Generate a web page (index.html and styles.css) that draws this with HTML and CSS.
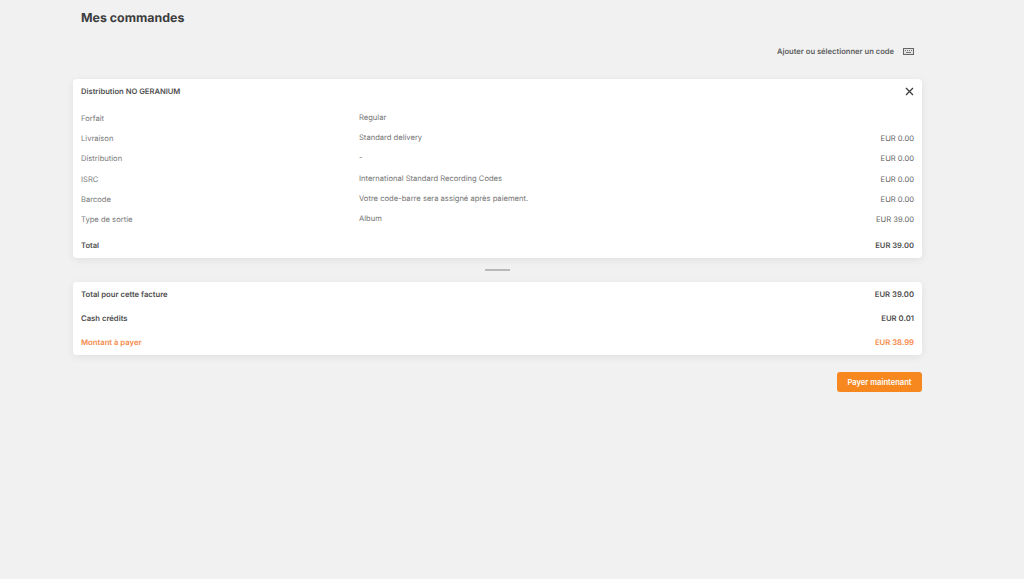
FILE: index.html
```html
<!DOCTYPE html>
<html lang="fr">
<head>
<meta charset="utf-8">
<title>Mes commandes</title>
<link rel="stylesheet" href="styles.css">
</head>
<body>
<main class="page">
  <h1 class="title">Mes commandes</h1>
  <div class="code-line">
    <span>Ajouter ou sélectionner un code</span>
    <svg class="code-icon" width="11" height="7" viewBox="0 0 11 7"><rect x="0.5" y="0.5" width="10" height="6" fill="#e4e4e4" stroke="#666"/><path d="M2 2h1v1H2zM4 2h1v1H4zM6 2h1v1H6zM8 2h1v1H8zM3 4h5v1H3z" fill="#777"/></svg>
  </div>
  <section class="card order">
    <header class="order-head">
      <span>Distribution NO GERANIUM</span>
      <svg class="close" width="9" height="9" viewBox="0 0 9 9"><path d="M1 1l7 7M8 1L1 8" stroke="#3c3c3c" stroke-width="1.3" fill="none"/></svg>
    </header>
    <div class="row"><span class="lbl">Forfait</span><span class="val">Regular</span><span class="price"></span></div>
    <div class="row"><span class="lbl">Livraison</span><span class="val">Standard delivery</span><span class="price">EUR 0.00</span></div>
    <div class="row"><span class="lbl">Distribution</span><span class="val">-</span><span class="price">EUR 0.00</span></div>
    <div class="row"><span class="lbl">ISRC</span><span class="val">International Standard Recording Codes</span><span class="price">EUR 0.00</span></div>
    <div class="row"><span class="lbl">Barcode</span><span class="val">Votre code-barre sera assigné après paiement.</span><span class="price">EUR 0.00</span></div>
    <div class="row"><span class="lbl">Type de sortie</span><span class="val">Album</span><span class="price">EUR 39.00</span></div>
    <div class="order-total"><span>Total</span><span>EUR 39.00</span></div>
  </section>
  <div class="divider"></div>
  <section class="card summary">
    <div class="sum-row"><span>Total pour cette facture</span><span>EUR 39.00</span></div>
    <div class="sum-row"><span>Cash crédits</span><span>EUR 0.01</span></div>
    <div class="sum-row due"><span>Montant à payer</span><span>EUR 38.99</span></div>
  </section>
  <div class="actions"><button class="pay">Payer maintenant</button></div>
</main>
</body>
</html>
```
FILE: styles.css
```css
* { box-sizing: border-box; }
html, body { margin: 0; height: 100%; }
body {
  background: #f1f1f2;
  font-family: Inter, Roboto, "Liberation Sans", sans-serif;
  color: #4a4a4a;
  overflow: hidden;
  text-rendering: geometricPrecision;
}
.page { width: 849px; margin-left: 73px; }
.title {
  margin: 0;
  padding: 10px 0 0 8px;
  font-size: 12.4px;
  line-height: 16px;
  font-weight: 700;
  color: #3d3d3d;
}
.code-line {
  display: flex;
  justify-content: flex-end;
  align-items: center;
  gap: 9px;
  margin-top: 17.5px;
  height: 16px;
  padding-right: 8px;
  font-size: 7.6px;
  font-weight: 600;
  color: #5e5e5e;
}
.card {
  background: #fff;
  border-radius: 4px;
  box-shadow: 0 2px 8px rgba(0, 0, 0, 0.07);
}
.order { margin-top: 19.5px; height: 179px; padding: 0 8px; }
.order-head {
  display: flex;
  justify-content: space-between;
  align-items: center;
  height: 25px;
  margin-bottom: 4.2px;
  font-size: 7.6px;
  font-weight: 600;
  color: #505050;
}
.row {
  display: grid;
  grid-template-columns: 278px 1fr auto;
  height: 20.3px;
  align-items: center;
  font-size: 7.6px;
  color: #7a7a7a;
}
.val { position: relative; top: -1px; color: #757575; }
.price { color: #626262; }
.order-total {
  display: flex;
  justify-content: space-between;
  align-items: center;
  height: 20px;
  margin-top: 6px;
  font-size: 7.6px;
  font-weight: 600;
  color: #4e4e4e;
}
.divider { width: 25px; height: 2px; margin: 11px auto; background: #b9b9b9; }
.summary { height: 73px; padding: 0 8px; }
.sum-row {
  display: flex;
  justify-content: space-between;
  align-items: center;
  height: 24.2px;
  font-size: 7.7px;
  font-weight: 600;
  color: #4e4e4e;
}
.due { color: #f58a4a; }
.actions { display: flex; justify-content: flex-end; margin-top: 17px; }
.pay {
  width: 85px;
  height: 20px;
  border: 0;
  padding: 0;
  border-radius: 3px;
  background: #f7871f;
  color: #fff;
  font: 600 7.6px Inter, Roboto, "Liberation Sans", sans-serif;
}
```
